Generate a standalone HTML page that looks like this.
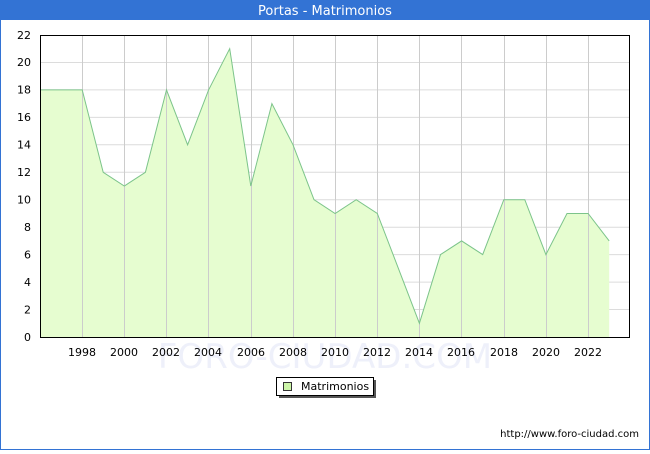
<!DOCTYPE html>
<html><head><meta charset="utf-8"><style>
body{margin:0;width:650px;height:450px;overflow:hidden;background:#fff;font-family:"DejaVu Sans","Liberation Sans",sans-serif}
</style></head><body>
<svg width="650" height="450" xmlns="http://www.w3.org/2000/svg" font-family="DejaVu Sans, Liberation Sans, sans-serif">
<rect x="0.5" y="0.5" width="649" height="449" fill="#fff" stroke="#3373d4"/>
<rect x="0" y="0" width="650" height="20" fill="#3373d4"/>
<text x="325" y="15" fill="#fff" font-size="13" text-anchor="middle">Portas - Matrimonios</text>
<text x="325" y="368" fill="#eef0fa" font-size="34" text-anchor="middle">FORO-CIUDAD.COM</text>
<g stroke="#dcdcdc" stroke-width="1">
<path d="M40 309.5H630M40 282.1H630M40 254.6H630M40 227.2H630M40 199.7H630M40 172.3H630M40 144.8H630M40 117.4H630M40 89.9H630M40 62.5H630"/>
</g>
<polygon fill="#e6fdd0" stroke="none" points="40,337 40,89.9 61.1,89.9 82.2,89.9 103.2,172.3 124.3,186 145.4,172.3 166.5,89.9 187.6,144.8 208.6,89.9 229.7,48.7 250.8,186 271.9,103.6 293,144.8 314,199.7 335.1,213.5 356.2,199.7 377.3,213.5 398.4,268.4 419.4,323.3 440.5,254.6 461.6,240.9 482.7,254.6 503.8,199.7 524.8,199.7 545.9,254.6 567,213.5 588.1,213.5 609.2,240.9 609.2,337"/>
<g stroke="#cccccc" stroke-width="1">
<path d="M82.5 35V337M124.5 35V337M166.5 35V337M208.5 35V337M251.5 35V337M293.5 35V337M335.5 35V337M377.5 35V337M419.5 35V337M461.5 35V337M504.5 35V337M546.5 35V337M588.5 35V337"/>
</g>
<polyline fill="none" stroke="#7cc48a" stroke-width="1" points="40,89.9 61.1,89.9 82.2,89.9 103.2,172.3 124.3,186 145.4,172.3 166.5,89.9 187.6,144.8 208.6,89.9 229.7,48.7 250.8,186 271.9,103.6 293,144.8 314,199.7 335.1,213.5 356.2,199.7 377.3,213.5 398.4,268.4 419.4,323.3 440.5,254.6 461.6,240.9 482.7,254.6 503.8,199.7 524.8,199.7 545.9,254.6 567,213.5 588.1,213.5 609.2,240.9"/>
<rect x="40.5" y="35.5" width="589" height="302" fill="none" stroke="#000"/>
<g font-size="11" fill="#000" text-anchor="end">
<text x="31" y="341">0</text><text x="31" y="313.5">2</text><text x="31" y="286">4</text><text x="31" y="258.5">6</text><text x="31" y="231">8</text><text x="31" y="203.5">10</text><text x="31" y="176">12</text><text x="31" y="148.5">14</text><text x="31" y="121">16</text><text x="31" y="93.5">18</text><text x="31" y="66">20</text><text x="31" y="39">22</text>
</g>
<g font-size="11" fill="#000" text-anchor="middle">
<text x="82" y="356">1998</text><text x="124" y="356">2000</text><text x="166" y="356">2002</text><text x="208" y="356">2004</text><text x="251" y="356">2006</text><text x="293" y="356">2008</text><text x="335" y="356">2010</text><text x="377" y="356">2012</text><text x="419" y="356">2014</text><text x="461" y="356">2016</text><text x="504" y="356">2018</text><text x="546" y="356">2020</text><text x="588" y="356">2022</text>
</g>
<rect x="279" y="380" width="97" height="18" fill="#555"/>
<rect x="276.5" y="377.5" width="97" height="18" fill="#fff" stroke="#000"/>
<rect x="283.5" y="382.5" width="8" height="8" fill="#ccf5a8" stroke="#333"/>
<text x="301" y="390" font-size="11" fill="#000">Matrimonios</text>
<text x="639" y="437" font-size="10" fill="#000" text-anchor="end">http://www.foro-ciudad.com</text>
</svg>
</body></html>
